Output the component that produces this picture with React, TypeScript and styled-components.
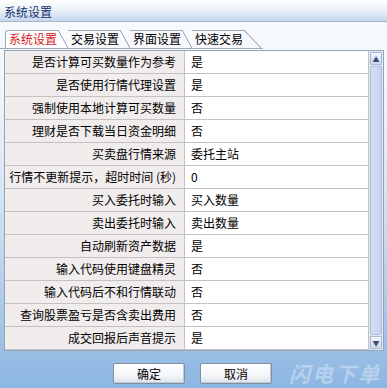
import React from 'react';
import styled, { createGlobalStyle } from 'styled-components';

const GlobalStyle = createGlobalStyle`
    html, body {
        margin: 0;
        padding: 0;
        overflow: hidden;
    }
    body {
        font-family: "Noto Sans CJK SC", "DejaVu Sans", sans-serif;
        font-size: 12px;
    }
`;

const Window = styled.div`
    width: 387px;
    height: 388px;
    display: flex;
    flex-direction: column;
    background: linear-gradient(
        180deg,
        #f9fbfd 0%,
        #f1f6fb 22%,
        #d6e5f4 50%,
        #b0cdeb 75%,
        #8cb6e2 100%
    );
    overflow: hidden;
`;

const TitleBar = styled.div`
    height: 25px;
    display: flex;
    align-items: center;
    padding: 1px 0 0 4px;
    box-sizing: border-box;
    background: linear-gradient(180deg, #ffffff 0%, #eef3fa 45%, #c5d7ef 100%);
    border-bottom: 1px solid #a9b6c6;
    color: #12306e;
    font-size: 12px;
`;

const TabStrip = styled.div`
    display: flex;
    align-items: flex-end;
    margin-top: 8px;
    padding-left: 5px;
    height: 18px;
    border-bottom: 1px solid #9fabba;
    width: 258px;
`;

const Tab = styled.div<{ $active?: boolean; $first?: boolean; $tail?: number }>`
    position: relative;
    height: 17px;
    line-height: 16px;
    padding: 0 ${(p) => p.$tail ?? 11}px 0 3px;
    border-top: 1px solid #9fabba;
    border-left: ${(p) => (p.$first ? '1px solid #9fabba' : 'none')};
    border-top-left-radius: ${(p) => (p.$first ? '3px' : '0')};
    background: ${(p) => (p.$active ? '#ffffff' : '#f7f9fc')};
    color: ${(p) => (p.$active ? '#d42020' : '#000')};
    white-space: nowrap;

    &::after {
        content: '';
        position: absolute;
        top: -1px;
        right: 0;
        bottom: 0;
        width: ${(p) => (p.$tail ?? 11) - 1}px;
        background: linear-gradient(
            to top right,
            transparent calc(50% - 0.8px),
            #8e9bab 50%,
            #f8fafd calc(50% + 0.8px)
        );
    }
`;

const Panel = styled.div`
    margin: 1px 0 0 4px;
    width: 378px;
    border: 1px solid #98a4b4;
    display: flex;
    background: #fff;
`;

const Rows = styled.div`
    flex: 1;
    display: flex;
    flex-direction: column;
`;

const Row = styled.div`
    display: grid;
    grid-template-columns: 180px 1fr;
    height: 22px;
    border-bottom: 1px solid #c2c2c2;
`;

const Label = styled.div`
    background: #f1eded;
    border-right: 1px solid #c2c2c2;
    text-align: right;
    padding-right: 8px;
    line-height: 22px;
    color: #000;
    white-space: nowrap;
`;

const Value = styled.div`
    padding-left: 6px;
    line-height: 22px;
    color: #000;
    border-right: 1px solid #c2c2c2;
`;

const Scrollbar = styled.div`
    width: 14px;
    display: flex;
    flex-direction: column;
    background: #dfe8f6;
`;

const ArrowButton = styled.div`
    height: 11px;
    margin: 1px 1px;
    display: flex;
    align-items: center;
    justify-content: center;
    background: linear-gradient(180deg, #f4f7fd, #cbd8ef);
    border: 1px solid #a9b9d6;
    border-radius: 1px;
    color: #3b4d70;
    font-size: 7px;
`;

const Thumb = styled.div`
    flex: 1;
    margin: 0 1px;
    background: linear-gradient(90deg, #d3def3, #c4d3ef);
    border: 1px solid #aebfde;
    border-radius: 2px;
`;

const Footer = styled.div`
    display: flex;
    align-items: center;
    padding: 7px 0 0 113px;
    gap: 15px;
`;

const Button = styled.button`
    width: 72px;
    height: 21px;
    padding: 0;
    font-family: "Noto Sans CJK SC", sans-serif;
    font-size: 12px;
    color: #000;
    background: linear-gradient(180deg, #ffffff 0%, #f3f5f8 60%, #dde3ea 100%);
    border: 1px solid #7f8fa5;
    border-radius: 2px;
    box-shadow: inset -1px -1px 0 #c2cad6;
`;

const Watermark = styled.div`
    margin-left: 2px;
    font-size: 21px;
    font-weight: bold;
    font-style: italic;
    letter-spacing: 2px;
    color: rgba(255, 255, 255, 0.35);
    white-space: nowrap;
`;

const settings: [string, string][] = [
    ['是否计算可买数量作为参考', '是'],
    ['是否使用行情代理设置', '是'],
    ['强制使用本地计算可买数量', '否'],
    ['理财是否下载当日资金明细', '否'],
    ['买卖盘行情来源', '委托主站'],
    ['行情不更新提示，超时时间 (秒)', '0'],
    ['买入委托时输入', '买入数量'],
    ['卖出委托时输入', '卖出数量'],
    ['自动刷新资产数据', '是'],
    ['输入代码使用键盘精灵', '否'],
    ['输入代码后不和行情联动', '否'],
    ['查询股票盈亏是否含卖出费用', '否'],
    ['成交回报后声音提示', '是'],
];

const App: React.FC = () => {
    return (
        <>
            <GlobalStyle />
            <Window>
                <TitleBar>系统设置</TitleBar>
                <TabStrip>
                    <Tab $active $first>系统设置</Tab>
                    <Tab>交易设置</Tab>
                    <Tab>界面设置</Tab>
                    <Tab $tail={18}>快速交易</Tab>
                </TabStrip>
                <Panel>
                    <Rows>
                        {settings.map(([label, value]) => (
                            <Row key={label}>
                                <Label>{label}</Label>
                                <Value>{value}</Value>
                            </Row>
                        ))}
                    </Rows>
                    <Scrollbar>
                        <ArrowButton>▲</ArrowButton>
                        <Thumb />
                        <ArrowButton>▼</ArrowButton>
                    </Scrollbar>
                </Panel>
                <Footer>
                    <Button>确定</Button>
                    <Button>取消</Button>
                    <Watermark>闪电下单</Watermark>
                </Footer>
            </Window>
        </>
    );
};

export default App;
